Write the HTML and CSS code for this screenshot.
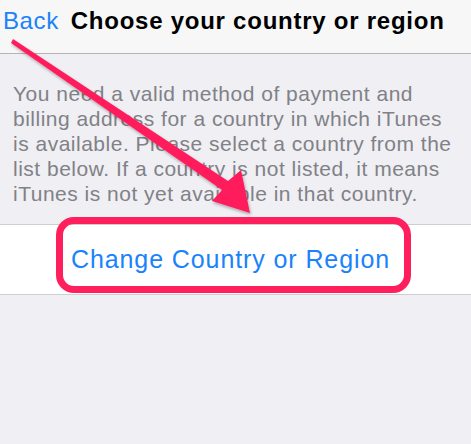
FILE: index.html
```html
<!DOCTYPE html>
<html lang="en">
<head>
  <meta charset="UTF-8">
  <meta name="viewport" content="width=device-width, initial-scale=1.0">
  <title>Choose your country or region</title>
  <link rel="stylesheet" href="styles.css">
</head>
<body>
  <div class="navbar">
    <a href="#" class="back">Back</a>
    <div class="title">Choose your country or region</div>
  </div>

  <p class="note">
    You need a valid method of payment and billing address for a country in which iTunes is available. Please select a country from the list below. If a country is not listed, it means iTunes is not yet available in that country.
  </p>

  <div class="cell">
    <a href="#" class="change">Change Country or Region</a>
  </div>

  <!-- anotacoes por cima da tela -->
  <div class="highlight"></div>
  <svg class="arrow" viewBox="0 0 471 444" width="471" height="444">
    <defs>
      <filter id="shadow" x="-10%" y="-10%" width="130%" height="130%">
        <feDropShadow dx="1" dy="2" stdDeviation="1.5" flood-color="#000" flood-opacity="0.3"/>
      </filter>
    </defs>
    <path filter="url(#shadow)" fill="#ff1f5d"
      d="M11 43 L13 39 L228 181 L241 170 L250 213 L212 201 L222 190 Z"/>
  </svg>
</body>
</html>
```

FILE: styles.css
```css
body {
  margin: 0;
  padding: 0;
  width: 471px;
  height: 444px;
  overflow: hidden;
  position: relative;
  background-color: #efeff4;
  font-family: "Liberation Sans", Arial, sans-serif;
}

.navbar {
  height: 53px;
  display: flex;
  align-items: center;
  gap: 12px;
  padding: 0 0 0 3px;
  background-color: #f7f7f8;
  border-bottom: 1px solid #b4b4b8;
}

.navbar .back {
  color: #1a82fb;
  text-decoration: none;
  font-size: 24px;
  letter-spacing: 0.6px;
  margin-top: -12px;
}

.navbar .title {
  color: #000;
  font-weight: bold;
  font-size: 24px;
  letter-spacing: 0.75px;
  margin-top: -12px;
}

.note {
  margin: 0;
  padding: 27px 14px 18px 13px;
  color: #818186;
  font-size: 21px;
  letter-spacing: 0.5px;
  line-height: 25px;
}

.cell {
  height: 69px;
  display: flex;
  align-items: center;
  justify-content: center;
  background-color: #fff;
  border-top: 1px solid #cfcfd3;
  border-bottom: 1px solid #cfcfd3;
}

.cell .change {
  color: #1a82fb;
  text-decoration: none;
  font-size: 25px;
  letter-spacing: 0.9px;
  margin-right: 10px;
}

.highlight {
  position: absolute;
  left: 56px;
  top: 217px;
  width: 341px;
  height: 62px;
  border: 7px solid #ff1f5d;
  border-radius: 18px;
}

.arrow {
  position: absolute;
  left: 0;
  top: 0;
  pointer-events: none;
}
```
